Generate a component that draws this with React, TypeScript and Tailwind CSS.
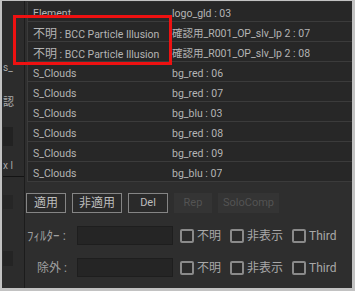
import * as React from "react"

const rows = [
    { a: "Element", b: "logo_gld : 03" },
    { a: "不明 : BCC Particle Illusion", b: "確認用_R001_OP_slv_lp 2 : 07" },
    { a: "不明 : BCC Particle Illusion", b: "確認用_R001_OP_slv_lp 2 : 08" },
    { a: "S_Clouds", b: "bg_red : 06" },
    { a: "S_Clouds", b: "bg_red : 07" },
    { a: "S_Clouds", b: "bg_blu : 03" },
    { a: "S_Clouds", b: "bg_red : 08" },
    { a: "S_Clouds", b: "bg_red : 09" },
    { a: "S_Clouds", b: "bg_blu : 07" },
]

const font = { fontFamily: "Roboto, 'Noto Sans CJK JP', sans-serif" }

// draws 不明 a bit larger, as the CJK fallback does in the original
function Cell({ text }: { text: string }) {
    if (text.startsWith("不明")) {
        return (
            <>
                <span className="text-[12px]">不明</span>
                {text.slice(2)}
            </>
        )
    }
    return <>{text}</>
}

function Btn({ label, w, disabled, small }: { label: string; w: string; disabled?: boolean; small?: boolean }) {
    if (disabled) {
        return (
            <div className={`${w} h-[20px] flex items-center justify-center bg-[#343434] text-[#535353] text-[11px]`}>
                {label}
            </div>
        )
    }
    return (
        <div
            className={`${w} h-[20px] flex items-center justify-center border border-[#858585] bg-[#2a2a2a] text-[#bdbdbd] ${small ? "text-[11px]" : "text-[12px]"}`}
        >
            {label}
        </div>
    )
}

function Check({ label }: { label: string }) {
    return (
        <div className="flex items-center gap-[3px]">
            <div className="w-[14px] h-[14px] rounded-[2px] border-2 border-[#8a8a8a] bg-[#2a2a2a]" />
            <span className="text-[12px] text-[#a8a8a8]">{label}</span>
        </div>
    )
}

function FilterRow({ label, pad }: { label: string; pad: string }) {
    return (
        <div className="flex items-center h-[19px]">
            <div className={`w-[50px] ${pad} text-[12px] text-[#a0a0a0] whitespace-nowrap`}>{label}</div>
            <div className="w-[96px] h-[19px] bg-[#252525] border border-[#1e1e1e]" />
            <div className="ml-[7px] flex items-center gap-[9px]">
                <Check label="不明" />
                <Check label="非表示" />
                <Check label="Third" />
            </div>
        </div>
    )
}

export default function App() {
    return (
        <div className="relative w-[355px] h-[291px] bg-[#c2c2c2] pt-px pr-[3px] pb-[3px] pl-[2px]" style={font}>
            <div className="flex h-full bg-[#2e2e2e] overflow-hidden">
                {/* cropped panel on the left */}
                <div className="w-[23px] shrink-0 flex flex-col bg-[#2c2c2c] border-r border-[#1c1c1c] text-[#a8a8a8] text-[10px] leading-none pl-px">
                    <div className="h-[60px]" />
                    <div className="h-[12px] flex items-end">s_</div>
                    <div className="h-[24px]" />
                    <div className="text-[11px]">認</div>
                    <div className="h-[19px]" />
                    <div className="h-[19px] w-[10px] bg-[#222222]" />
                    <div className="h-[15px]" />
                    <div className="text-[10px]">x l</div>
                    <div className="h-[6px] border-b border-[#141414]" />
                    <div className="h-[18px]" />
                    <div className="h-[14px] w-[10px] bg-[#262626]" />
                    <div className="h-[42px]" />
                    <div className="h-[15px] w-[10px] bg-[#242424]" />
                </div>

                {/* main */}
                <div className="flex-1 pl-[2px] pt-px flex flex-col">
                    <div className="bg-[#272727] border-l border-[#3a3a3a]">
                        {rows.map((r, i) => (
                            <div
                                key={i}
                                className="h-[20px] pt-[5px] flex items-center border-b border-[#3b3b3b] text-[10.5px] text-[#b4b4b4] whitespace-nowrap"
                            >
                                <div className="w-[143px] pl-[5px] shrink-0">
                                    <Cell text={r.a} />
                                </div>
                                <div className="pl-[1px] overflow-hidden">{r.b}</div>
                            </div>
                        ))}
                    </div>

                    <div className="mt-[11px] -ml-px flex gap-[6px]">
                        <Btn label="適用" w="w-[40px]" />
                        <Btn label="非適用" w="w-[50px]" />
                        <Btn label="Del" w="w-[40px]" small />
                        <Btn label="Rep" w="w-[38px]" disabled />
                        <Btn label="SoloComp" w="w-[61px]" disabled />
                    </div>

                    <div className="mt-[13px] flex flex-col gap-[13px]">
                        <FilterRow label="ﾌｨﾙﾀｰ :" pad="pl-0 text-[13px]" />
                        <FilterRow label="除外 :" pad="pl-[10px]" />
                    </div>
                </div>
            </div>

            {/* annotation */}
            <div className="absolute left-[13px] top-[15px] w-[159px] h-[50px] border-[3px] border-[#ee1111]" />
        </div>
    )
}
